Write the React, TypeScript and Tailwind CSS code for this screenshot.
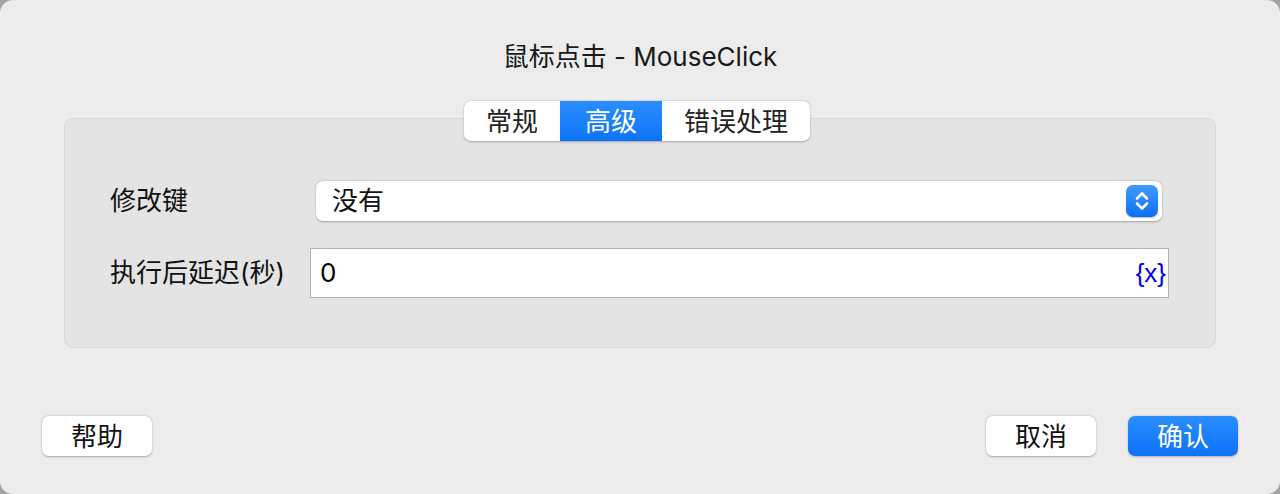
import React from 'react';

const Stepper = () => (
    <div className="flex h-[32px] w-[32px] items-center justify-center rounded-[7px] bg-gradient-to-b from-[#3f9bff] to-[#0a6ff5] shadow-[0_0.5px_1px_rgba(0,0,0,0.25)]">
        <svg width="18" height="24" viewBox="0 0 18 24" fill="none">
            <path d="M4 9.5 L9 4.5 L14 9.5" stroke="white" strokeWidth="2.6" strokeLinecap="round" strokeLinejoin="round" />
            <path d="M4 14.5 L9 19.5 L14 14.5" stroke="white" strokeWidth="2.6" strokeLinecap="round" strokeLinejoin="round" />
        </svg>
    </div>
);

export default function App() {
    const tabs = [
        { label: '常规', w: 'w-[96px]', active: false },
        { label: '高级', w: 'w-[102px]', active: true },
        { label: '错误处理', w: 'w-[148px]', active: false },
    ];

    return (
        <div className="h-[494px] w-[1280px] bg-[#a3a3a3] font-['Inter','Noto_Sans_CJK_SC',sans-serif] text-[#1c1c1c]">
            <div className="flex h-full flex-col rounded-[13px] bg-[#ececec]">
                {/* title */}
                <div className="pt-[42px] text-center text-[26px] leading-[30px] text-[#1a1a1a]">
                    鼠标点击 - MouseClick
                </div>

                {/* tabs */}
                <div className="relative z-10 mt-[29px] flex justify-center">
                    <div className="mr-[6px] flex h-[40px] overflow-hidden rounded-[7px] bg-white shadow-[0_0.5px_2px_rgba(0,0,0,0.3)]">
                        {tabs.map(t => (
                            <div
                                key={t.label}
                                className={
                                    t.active
                                        ? `${t.w} flex items-center justify-center bg-gradient-to-b from-[#2a8dff] to-[#0a74f7] text-[26px] text-white`
                                        : `${t.w} flex items-center justify-center text-[26px] text-[#222]`
                                }
                            >
                                {t.label}
                            </div>
                        ))}
                    </div>
                </div>

                {/* group box */}
                <div className="mx-[64px] mt-[-23px] h-[230px] rounded-[9px] border border-[#d9d9d9] bg-[#e4e4e4] pt-[62px] pl-[45px] pr-[46px]">
                    <div className="flex items-center">
                        <div className="w-[200px] shrink-0 text-[26px] leading-none text-[#111]">修改键</div>
                        <div className="ml-[6px] mr-[7px] flex h-[40px] flex-1 items-center justify-between rounded-[7px] bg-white pl-[16px] pr-[4px] shadow-[0_0.5px_2px_rgba(0,0,0,0.3)]">
                            <span className="text-[26px] leading-none text-[#111]">没有</span>
                            <Stepper />
                        </div>
                    </div>

                    <div className="mt-[27px] flex items-center">
                        <div className="w-[200px] shrink-0 text-[26px] leading-none text-[#111]">执行后延迟(秒)</div>
                        <div className="flex h-[50px] flex-1 items-center justify-between border border-[#b3b3b3] bg-white pl-[9px] pr-[2px]">
                            <span className="text-[26px] leading-none text-black">0</span>
                            <span className="font-['Liberation_Sans',sans-serif] text-[26px] leading-none text-[#0000ee]">{'{x}'}</span>
                        </div>
                    </div>
                </div>

                {/* buttons */}
                <div className="mt-auto flex items-center justify-between px-[42px] pb-[38px]">
                    <button className="h-[40px] w-[110px] rounded-[7px] bg-white text-[26px] text-[#111] shadow-[0_0.5px_2px_rgba(0,0,0,0.3)]">
                        帮助
                    </button>
                    <div className="flex gap-[32px]">
                        <button className="h-[40px] w-[110px] rounded-[7px] bg-white text-[26px] text-[#111] shadow-[0_0.5px_2px_rgba(0,0,0,0.3)]">
                            取消
                        </button>
                        <button className="h-[40px] w-[110px] rounded-[7px] bg-gradient-to-b from-[#2a8dff] to-[#0a72f6] text-[26px] text-white shadow-[0_0.5px_2px_rgba(0,0,0,0.25)]">
                            确认
                        </button>
                    </div>
                </div>
            </div>
        </div>
    );
}
